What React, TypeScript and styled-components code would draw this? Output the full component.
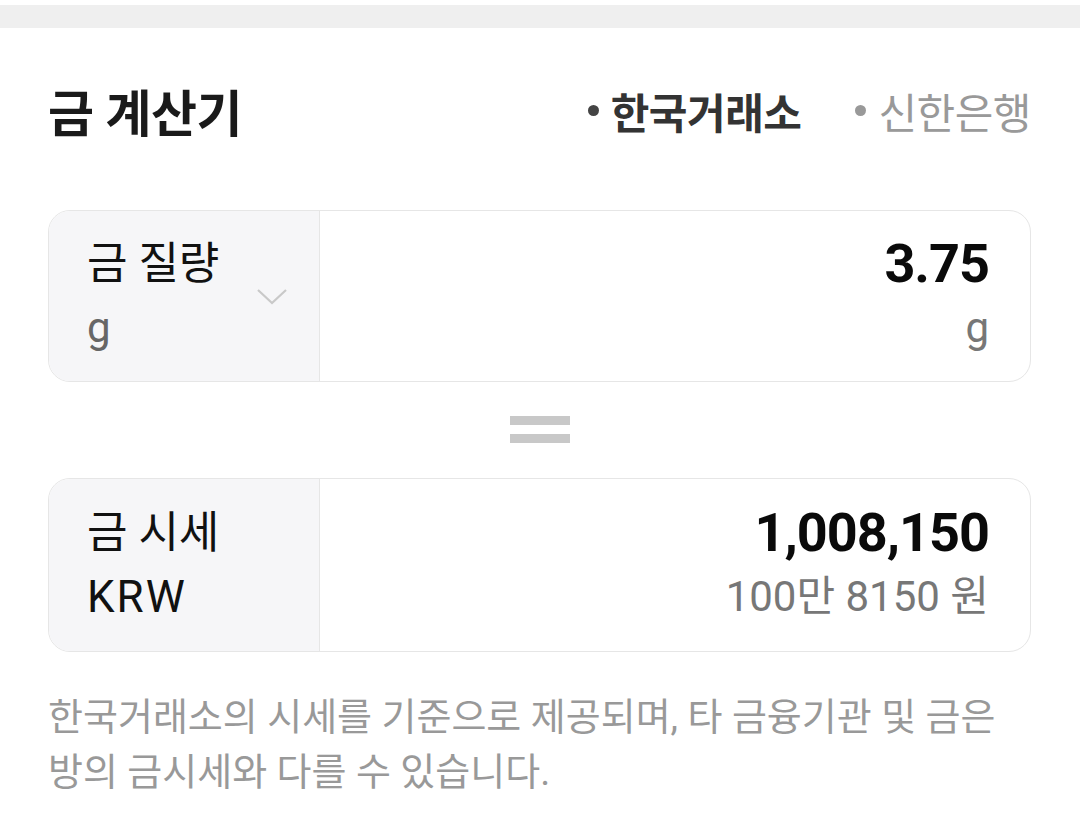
import styled, { createGlobalStyle } from "styled-components";

const GlobalStyle = createGlobalStyle`
  html, body {
    margin: 0;
    padding: 0;
    background: #fff;
  }
  body {
    font-family: Roboto, "Noto Sans CJK KR", "Noto Sans", sans-serif;
    color: #111;
  }
`;

const Page = styled.div`
  width: 1080px;
  padding-top: 5px;
`;

const TopStrip = styled.div`
  height: 23px;
  background: #efefef;
`;

const Body = styled.div`
  padding: 0 49px 0 48px;
`;

const Header = styled.div`
  display: flex;
  align-items: center;
  justify-content: space-between;
  height: 182px;
  padding-bottom: 18px;
  box-sizing: border-box;
`;

const Title = styled.h1`
  margin: 0;
  font-size: 50px;
  font-weight: 700;
  color: #1a1a1a;
  letter-spacing: -0.5px;
`;

const Tabs = styled.div`
  display: flex;
  align-items: center;
  gap: 54px;
`;

const Tab = styled.div<{ $active?: boolean }>`
  display: flex;
  align-items: center;
  gap: 12px;
  font-size: 42px;
  font-weight: ${(p) => (p.$active ? 700 : 400)};
  color: ${(p) => (p.$active ? "#333" : "#999")};
  letter-spacing: -0.5px;

  &::before {
    content: "";
    width: 11px;
    height: 11px;
    border-radius: 50%;
    background: ${(p) => (p.$active ? "#444" : "#999")};
  }
`;

const Card = styled.div<{ $h: number }>`
  display: flex;
  height: ${(p) => p.$h}px;
  border: 1.5px solid #e6e6e6;
  border-radius: 22px;
  overflow: hidden;
  box-sizing: border-box;
`;

const Side = styled.div`
  position: relative;
  width: 271px;
  flex: none;
  box-sizing: border-box;
  background: #f6f6f8;
  border-right: 1.5px solid #e6e6e6;
  display: flex;
  flex-direction: column;
  justify-content: center;
  padding-left: 38px;
`;

const Main = styled.div`
  flex: 1;
  display: flex;
  flex-direction: column;
  justify-content: center;
  align-items: flex-end;
  padding-right: 41px;
`;

const Label = styled.div<{ $wide?: boolean }>`
  font-size: 44px;
  line-height: 64px;
  color: #111;
  letter-spacing: ${(p) => (p.$wide ? "2px" : "0")};
`;

const Unit = styled.div`
  font-size: 42px;
  line-height: 64px;
  color: #666;
`;

const Value = styled.div`
  font-size: 54px;
  line-height: 64px;
  font-weight: 700;
  color: #0a0a0a;
  letter-spacing: -1px;
`;

const SubValue = styled.div`
  font-size: 42px;
  line-height: 64px;
  color: #777;
`;

const Chevron = styled.svg`
  position: absolute;
  right: 31px;
  top: 76px;
`;

const EqualsRow = styled.div`
  display: flex;
  flex-direction: column;
  align-items: center;
  gap: 9px;
  padding: 34px 0 35px;
`;

const Bar = styled.div`
  width: 60px;
  height: 9px;
  background: #c8c8c8;
`;

const Note = styled.p`
  margin: 38px 0 0;
  font-size: 38px;
  line-height: 55px;
  color: #999;
`;

export default function App() {
  return (
    <>
      <GlobalStyle />
      <Page>
        <TopStrip />
        <Body>
          <Header>
            <Title>금 계산기</Title>
            <Tabs>
              <Tab $active>한국거래소</Tab>
              <Tab>신한은행</Tab>
            </Tabs>
          </Header>

          <Card $h={172}>
            <Side>
              <Label>금 질량</Label>
              <Unit>g</Unit>
              <Chevron width="32" height="20" viewBox="0 0 32 20" fill="none">
                <path d="M2 3 L16 16 L30 3" stroke="#c9c9c9" strokeWidth="2.2" />
              </Chevron>
            </Side>
            <Main>
              <Value>3.75</Value>
              <SubValue>g</SubValue>
            </Main>
          </Card>

          <EqualsRow>
            <Bar />
            <Bar />
          </EqualsRow>

          <Card $h={174}>
            <Side>
              <Label>금 시세</Label>
              <Label $wide>KRW</Label>
            </Side>
            <Main>
              <Value>1,008,150</Value>
              <SubValue>100만 8150 원</SubValue>
            </Main>
          </Card>

          <Note>
            한국거래소의 시세를 기준으로 제공되며, 타 금융기관 및 금은
            <br />
            방의 금시세와 다를 수 있습니다.
          </Note>
        </Body>
      </Page>
    </>
  );
}
